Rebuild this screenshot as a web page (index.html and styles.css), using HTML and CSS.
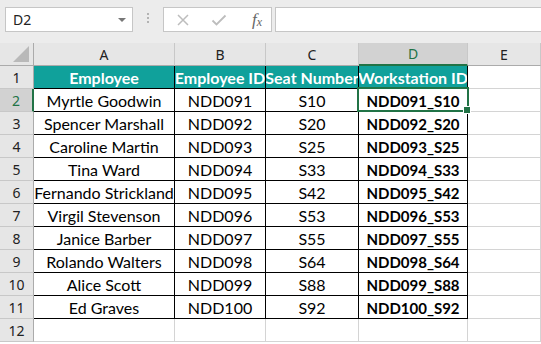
FILE: index.html
```html
<!DOCTYPE html>
<html>
<head>
    <title>Workstation IDs</title>
    <link rel="stylesheet" href="styles.css">
</head>
<body>
    <div class="toolbar">
        <div class="namebox">
            <span class="cellref">D2</span>
            <span class="arrow"></span>
        </div>
        <div class="dots">
            <span></span><span></span><span></span>
        </div>
        <div class="fxbox">
            <svg class="icon" width="14" height="14" viewBox="0 0 14 14">
                <path d="M2 2 L12 12 M12 2 L2 12" stroke="#bdbdbd" stroke-width="1.5" fill="none"/>
            </svg>
            <svg class="icon" width="16" height="14" viewBox="0 0 16 14">
                <path d="M1.5 7.5 L5.5 11.5 L14.5 2.5" stroke="#bdbdbd" stroke-width="1.8" fill="none"/>
            </svg>
            <span class="fx">f<sub>x</sub></span>
        </div>
        <div class="formula"></div>
    </div>

    <div class="sheet">
        <div class="corner"><span class="tri"></span></div>
        <div class="colhead">A</div>
        <div class="colhead">B</div>
        <div class="colhead">C</div>
        <div class="colhead active">D</div>
        <div class="colhead">E</div>

        <div class="rowhead">1</div>
        <div class="cell head">Employee</div>
        <div class="cell head">Employee ID</div>
        <div class="cell head">Seat Number</div>
        <div class="cell head">Workstation ID</div>
        <div class="cell empty"></div>

        <div class="rowhead active">2</div>
        <div class="cell">Myrtle Goodwin</div>
        <div class="cell">NDD091</div>
        <div class="cell">S10</div>
        <div class="cell bold selected">NDD091_S10</div>
        <div class="cell empty"></div>

        <div class="rowhead">3</div>
        <div class="cell">Spencer Marshall</div>
        <div class="cell">NDD092</div>
        <div class="cell">S20</div>
        <div class="cell bold">NDD092_S20</div>
        <div class="cell empty"></div>

        <div class="rowhead">4</div>
        <div class="cell">Caroline Martin</div>
        <div class="cell">NDD093</div>
        <div class="cell">S25</div>
        <div class="cell bold">NDD093_S25</div>
        <div class="cell empty"></div>

        <div class="rowhead">5</div>
        <div class="cell">Tina Ward</div>
        <div class="cell">NDD094</div>
        <div class="cell">S33</div>
        <div class="cell bold">NDD094_S33</div>
        <div class="cell empty"></div>

        <div class="rowhead">6</div>
        <div class="cell">Fernando Strickland</div>
        <div class="cell">NDD095</div>
        <div class="cell">S42</div>
        <div class="cell bold">NDD095_S42</div>
        <div class="cell empty"></div>

        <div class="rowhead">7</div>
        <div class="cell">Virgil Stevenson</div>
        <div class="cell">NDD096</div>
        <div class="cell">S53</div>
        <div class="cell bold">NDD096_S53</div>
        <div class="cell empty"></div>

        <div class="rowhead">8</div>
        <div class="cell">Janice Barber</div>
        <div class="cell">NDD097</div>
        <div class="cell">S55</div>
        <div class="cell bold">NDD097_S55</div>
        <div class="cell empty"></div>

        <div class="rowhead">9</div>
        <div class="cell">Rolando Walters</div>
        <div class="cell">NDD098</div>
        <div class="cell">S64</div>
        <div class="cell bold">NDD098_S64</div>
        <div class="cell empty"></div>

        <div class="rowhead">10</div>
        <div class="cell">Alice Scott</div>
        <div class="cell">NDD099</div>
        <div class="cell">S88</div>
        <div class="cell bold">NDD099_S88</div>
        <div class="cell empty"></div>

        <div class="rowhead">11</div>
        <div class="cell">Ed Graves</div>
        <div class="cell">NDD100</div>
        <div class="cell">S92</div>
        <div class="cell bold">NDD100_S92</div>
        <div class="cell empty"></div>

        <div class="rowhead">12</div>
        <div class="cell empty"></div>
        <div class="cell empty"></div>
        <div class="cell empty"></div>
        <div class="cell empty"></div>
        <div class="cell empty"></div>
    </div>
</body>
</html>
```

FILE: styles.css
```css
body {
    margin: 0;
    width: 541px;
    height: 344px;
    overflow: hidden;
    background-color: #ffffff;
    font-family: Lato, "Liberation Sans", sans-serif;
}

/* formula bar strip */
.toolbar {
    display: flex;
    align-items: flex-start;
    height: 43px;
    padding: 7px 0 0 5px;
    box-sizing: border-box;
    background-color: #ececec;
}

.namebox {
    display: flex;
    align-items: center;
    justify-content: space-between;
    width: 128px;
    height: 25px;
    padding: 0 6px 0 7px;
    box-sizing: border-box;
    background-color: #ffffff;
    border: 1px solid #c6c6c6;
    font-family: "Noto Sans", "Open Sans", sans-serif;
    font-size: 14px;
    color: #222222;
}

.arrow {
    width: 0;
    height: 0;
    border-left: 4px solid transparent;
    border-right: 4px solid transparent;
    border-top: 4px solid #777777;
}

.dots {
    display: flex;
    flex-direction: column;
    gap: 2px;
    margin: 6px 14px 0 14px;
}

.dots span {
    width: 2px;
    height: 2px;
    background-color: #b3b3b3;
}

.fxbox {
    display: flex;
    align-items: center;
    width: 109px;
    height: 25px;
    box-sizing: border-box;
    padding-left: 12px;
    gap: 21px;
    background-color: #ffffff;
    border: 1px solid #c6c6c6;
}

.fx {
    margin-left: 4px;
    font-family: "Liberation Serif", serif;
    font-style: italic;
    font-size: 17px;
    color: #666666;
}

.fx sub {
    font-size: 12px;
    vertical-align: -1px;
}

.formula {
    flex: 1;
    height: 25px;
    margin-left: 3px;
    box-sizing: border-box;
    background-color: #ffffff;
    border: 1px solid #c6c6c6;
    border-right: none;
}

/* worksheet grid */
.sheet {
    display: grid;
    grid-template-columns: 34px 141px 91px 93px 109px 73px;
    grid-template-rows: repeat(13, 23px);
    font-size: 16px;
}

.corner,
.colhead,
.rowhead {
    display: flex;
    align-items: center;
    justify-content: center;
    box-sizing: border-box;
    background-color: #e6e6e6;
    border-right: 1px solid #ababab;
    border-bottom: 1px solid #ababab;
    color: #222222;
}

.corner {
    justify-content: flex-end;
    align-items: flex-end;
    padding: 0 4px 3px 0;
}

.tri {
    width: 0;
    height: 0;
    border-left: 16px solid transparent;
    border-bottom: 16px solid #b9b9b9;
}

.colhead {
    font-family: "Noto Sans", "Open Sans", sans-serif;
    font-size: 14px;
    border-right-color: #c8c8c8;
}

.rowhead {
    font-family: "Noto Sans", "Open Sans", sans-serif;
    font-size: 14px;
    border-bottom-color: #c8c8c8;
}

.colhead.active {
    background-color: #d2d2d2;
    border-bottom: 2px solid #217346;
    color: #217346;
}

.rowhead.active {
    background-color: #d2d2d2;
    border-right: 2px solid #217346;
    color: #217346;
}

.cell {
    position: relative;
    display: flex;
    align-items: center;
    justify-content: center;
    padding-top: 1px;
    box-sizing: border-box;
    white-space: nowrap;
    overflow: hidden;
    border-right: 1px solid #000000;
    border-bottom: 1px solid #000000;
    color: #000000;
}

.cell.head {
    background-color: #10a19b;
    color: #ffffff;
    font-weight: bold;
    font-size: 16px;
}

.cell.bold {
    font-weight: bold;
    font-size: 15px;
}

.cell.empty {
    border-right-color: #d4d4d4;
    border-bottom-color: #d4d4d4;
}

.cell.selected {
    overflow: visible;
    z-index: 2;
}

.cell.selected::after {
    content: "";
    position: absolute;
    top: -2px;
    left: -2px;
    right: -2px;
    bottom: -1px;
    border: 2px solid #217346;
}

.cell.selected::before {
    content: "";
    position: absolute;
    right: -4px;
    bottom: -3px;
    width: 6px;
    height: 6px;
    background-color: #217346;
    border: 1px solid #ffffff;
    z-index: 3;
}
```
